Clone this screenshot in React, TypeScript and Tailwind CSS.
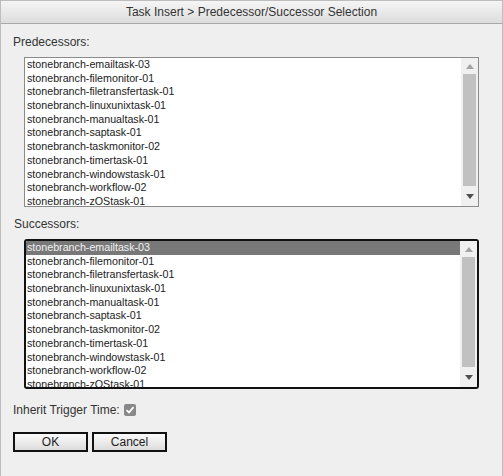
import React from "react";

const items = [
  "stonebranch-emailtask-03",
  "stonebranch-filemonitor-01",
  "stonebranch-filetransfertask-01",
  "stonebranch-linuxunixtask-01",
  "stonebranch-manualtask-01",
  "stonebranch-saptask-01",
  "stonebranch-taskmonitor-02",
  "stonebranch-timertask-01",
  "stonebranch-windowstask-01",
  "stonebranch-workflow-02",
  "stonebranch-zOStask-01",
];

function ScrollBar() {
  return (
    <div className="w-[17px] h-full bg-[#f0f0f0] flex flex-col shrink-0">
      <div className="h-[16px] flex items-center justify-center">
        <svg width="8" height="5" viewBox="0 0 8 5">
          <polygon points="0,5 8,5 4,0" fill="#a3a3a3" />
        </svg>
      </div>
      <div className="flex-1 px-[2px]">
        <div className="h-full bg-[#c1c1c1]" />
      </div>
      <div className="h-[20px] flex items-center justify-center">
        <svg width="8" height="5" viewBox="0 0 8 5">
          <polygon points="0,0 8,0 4,5" fill="#505050" />
        </svg>
      </div>
    </div>
  );
}

function ListBox({ focused }: { focused: boolean }) {
  return (
    <div
      className={
        focused
          ? "ml-[23px] w-[455px] h-[150px] border-2 border-[#111] rounded-[3px] bg-white flex overflow-hidden"
          : "ml-[23px] w-[455px] h-[150px] border border-[#8a8a8a] bg-white flex overflow-hidden"
      }
    >
      <div className="flex-1 overflow-hidden">
        {items.map((it, i) => (
          <div
            key={it}
            className={
              focused && i === 0
                ? "h-[13.7px] leading-[13.7px] pl-[1px] text-[10.7px] bg-[#787878] text-[#f2f2f2] whitespace-nowrap"
                : focused
                ? "h-[13.7px] leading-[13.7px] pl-[1px] text-[10.7px] text-[#222] whitespace-nowrap"
                : "h-[13.7px] leading-[13.7px] pl-[2px] text-[10.7px] text-[#222] whitespace-nowrap"
            }
          >
            {it}
          </div>
        ))}
      </div>
      <ScrollBar />
    </div>
  );
}

export default function App() {
  return (
    <div
      className="w-[503px] h-[476px] bg-[#efefef] border-x border-t border-[#bdbdbd] text-[#222] overflow-hidden"
      style={{ fontFamily: '"Liberation Sans", Arial, sans-serif' }}
    >
      <div className="h-[23px] border-b border-[#a8a8a8] bg-gradient-to-b from-[#f5f5f5] to-[#dddddd] flex items-center justify-center text-[12px] text-[#333]">
        Task Insert &gt; Predecessor/Successor Selection
      </div>
      <div className="pt-[11px]">
        <div className="pl-[12px] text-[12px] leading-[14px] text-[#333]">Predecessors:</div>
        <div className="mt-[8px]">
          <ListBox focused={false} />
        </div>
        <div className="mt-[10px] pl-[13px] text-[12px] leading-[14px] text-[#333]">Successors:</div>
        <div className="mt-[8px]">
          <ListBox focused={true} />
        </div>
        <div className="mt-[14px] pl-[12px] flex items-center h-[14px] text-[12px] text-[#333]">
          <span>Inherit Trigger Time:</span>
          <span className="ml-[4px] w-[12px] h-[12px] rounded-[2px] bg-[#888] flex items-center justify-center">
            <svg width="10" height="10" viewBox="0 0 10 10">
              <polyline points="1.5,5.2 4,7.5 8.5,2.2" fill="none" stroke="#fff" strokeWidth="1.8" />
            </svg>
          </span>
        </div>
        <div className="mt-[15px] pl-[12px] flex gap-[4px]">
          <button className="w-[75px] h-[20px] border-2 border-[#111] bg-gradient-to-b from-[#fbfbfb] to-[#dcdcdc] text-[12px] text-[#222] leading-none">
            OK
          </button>
          <button className="w-[75px] h-[20px] border-2 border-[#111] bg-gradient-to-b from-[#fbfbfb] to-[#dcdcdc] text-[12px] text-[#222] leading-none">
            Cancel
          </button>
        </div>
      </div>
    </div>
  );
}
